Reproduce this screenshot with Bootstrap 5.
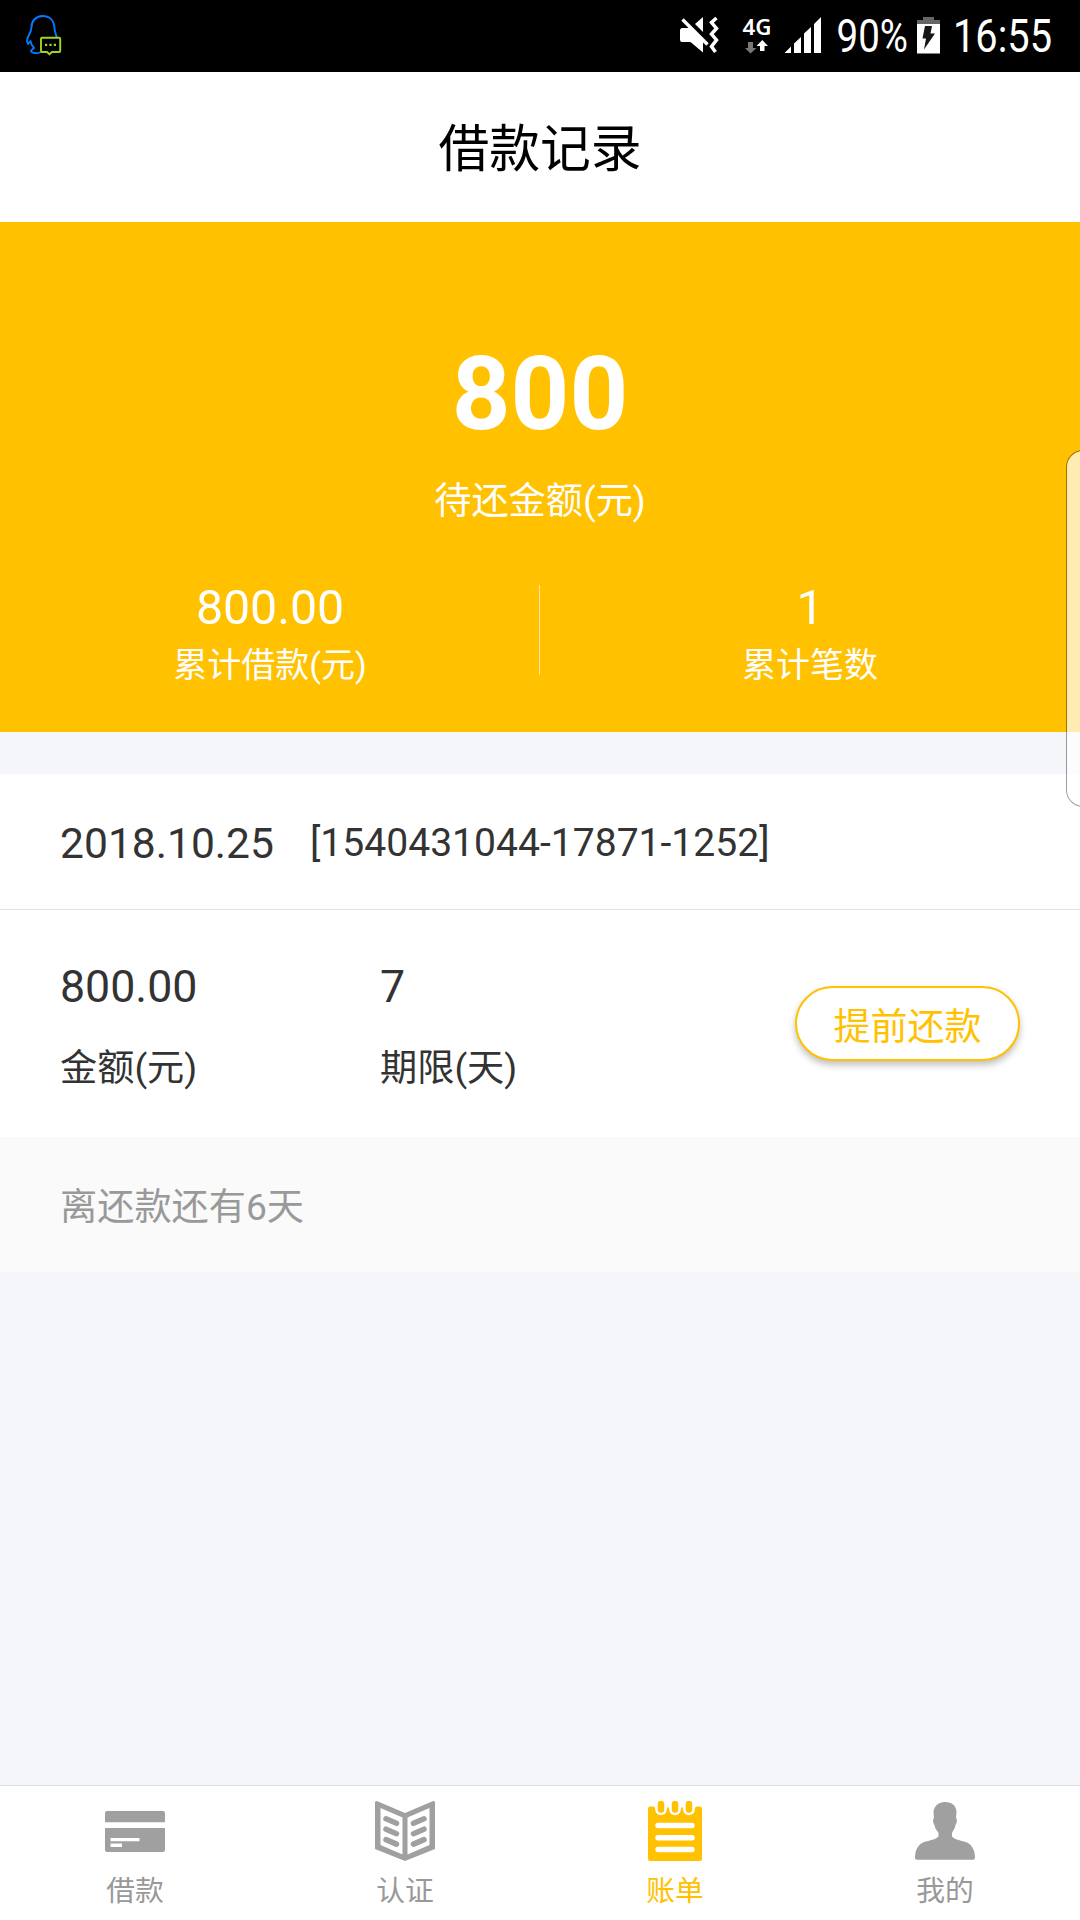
<!DOCTYPE html>
<html lang="zh-CN">
<head>
<meta charset="utf-8">
<meta name="viewport" content="width=device-width, initial-scale=1">
<title>借款记录</title>
<link href="https://cdn.jsdelivr.net/npm/bootstrap@5.3.0/dist/css/bootstrap.min.css" rel="stylesheet">
<style>
body{font-family:Roboto,"Noto Sans CJK SC",sans-serif;background:#f4f6fa;color:#333;line-height:1}
.screen{width:1080px;height:1920px}
.status-bar{height:72px;background:#000}
.title-bar{height:150px;font-size:50.8px;color:#000;padding-top:7px}
.hero{height:510px;background:#ffc100}
.hero-total{font-size:102.5px;line-height:104px;padding-top:120px}
.hero-label{font-size:37.2px;line-height:50px;margin-top:30px}
.hero-stats{margin-top:59px;height:90px}
.stat-sep{width:1px;margin-left:-1px;background:rgba(255,255,255,.6)}
.stat-num{font-size:48.2px;line-height:50px;margin-top:-2px}
.stat-label{font-size:34px;line-height:40px;margin-top:12px}
.record{margin-top:42px}
.record-head{height:136px;border-bottom:1px solid #e0e0e0;padding:3px 60px 0;gap:36px}
.rec-date{font-size:42.6px}
.rec-no{font-size:39.1px;padding-top:2px}
.record-main{height:227px;padding:0 60px}
.rec-cell{width:320px;padding-top:52px}
.rec-val{font-size:44.7px;line-height:50px}
.rec-key{font-size:37.2px;line-height:50px;margin-top:31px}
.btn-repay{width:225px;height:75px;margin-top:-1px;border:2px solid #ffc100;border-radius:38px;color:#ffc100;background:#fff;font-size:37px;line-height:1;padding:8px 0 0;box-shadow:0 4px 7px rgba(0,0,0,.25)}
.record-foot{height:135px;background:#fafafa;color:#999;font-size:37.2px;padding:7px 60px 0}
.tab-bar{height:135px;border-top:1px solid #dcdfe3}
.tab-item{color:#999;font-size:28.8px;padding-top:15px}
.tab-item svg{width:60px;height:60px;fill:#a0a0a0}
.tab-item span{line-height:30px;margin-top:15px}
.tab-item.active{color:#ffc100}
.tab-item.active svg{fill:#ffc100}
.edge-panel{right:-20px;top:450px;width:34px;height:357px;border:1.500px solid rgba(0,0,0,.38);border-radius:20px;background:rgba(255,255,255,.69);background-clip:padding-box}
</style>
</head>
<body>
<div class="screen position-relative overflow-hidden d-flex flex-column">
  <div class="status-bar d-flex flex-shrink-0 justify-content-between">
    <svg width="120" height="72" viewBox="0 0 120 72" fill="none">
      <path d="M57 38C56 34 54.500 32 54.500 28C54 20 49 16 42.500 16C36 16 31.500 21 31.500 27C31.500 33 27.500 35 27 41L28 44L30.500 41C31 45 32 46 34 48C32 50 30 51 31.500 52C34 53.500 38 53.500 41 52" stroke="#007dff" stroke-width="1.900" stroke-linejoin="round"/>
      <path d="M42 37.800H59.200Q60.200 37.800 60.200 38.800V51Q60.200 52 59.200 52H52L49.500 54.300L47 52H42Q41 52 41 51V38.800Q41 37.800 42 37.800Z" stroke="#a6d41c" stroke-width="1.900"/>
      <path d="M45 43.700h2.200v2.200H45zM49.400 43.700h2.200v2.200h-2.200zM53.800 43.700H56v2.200h-2.200z" fill="#a6d41c"/>
    </svg>
    <svg width="420" height="72" viewBox="0 0 420 72" fill="#fff">
      <path d="M30 26.500L28 28H22.500Q20 28 20 30.500V39.500Q20 42 22 42H30.500L43 52.500V40Z"/>
      <path d="M35 24L43 17V32Z"/>
      <path d="M22.500 19.500L47.500 44.500" stroke="#fff" stroke-width="3.300"/>
      <path d="M56.500 18L51.500 22.500L56.500 28.500L51.500 34L56.500 40L51.500 46.500L55.500 52" fill="none" stroke="#fff" stroke-width="3.500"/>
      <text x="82.500" y="34.500" font-family="Noto Sans" font-weight="600" font-size="21.500" textLength="29" lengthAdjust="spacingAndGlyphs">4G</text>
      <path d="M88 42h5v6h3.500L90.500 53.500L85 48h3z" fill="#777"/>
      <path d="M100 51V46h-3.500L102.300 40L108 46h-3.500v5z"/>
      <path d="M124.500 53L131 46.500V53ZM134 53V43.500L141 37V53ZM144 53V33.500L151 27V53ZM154 53V24L161 17V53Z"/>
      <text x="176.500" y="52" font-family="Roboto" font-size="46" textLength="71.500" lengthAdjust="spacingAndGlyphs">90%</text>
      <path d="M263 17h11v3h6v4h-23v-4h6z" fill="#666"/>
      <path d="M257 24h23v29.500h-23z"/>
      <path d="M265 26H272L270.500 33.500H275L264 49.500L266 38.500H262.500Z" fill="#161616"/>
      <text x="293" y="52" font-family="Roboto" font-size="46" textLength="99" lengthAdjust="spacingAndGlyphs">16:55</text>
    </svg>
  </div>
  <header class="title-bar bg-white d-flex flex-shrink-0 align-items-center justify-content-center">借款记录</header>
  <section class="hero text-white text-center flex-shrink-0">
    <div class="hero-total fw-bold">800</div>
    <div class="hero-label">待还金额(元)</div>
    <div class="hero-stats d-flex">
      <div class="flex-fill w-50"><div class="stat-num">800.00</div><div class="stat-label">累计借款(元)</div></div>
      <div class="stat-sep flex-shrink-0"></div>
      <div class="flex-fill w-50"><div class="stat-num">1</div><div class="stat-label">累计笔数</div></div>
    </div>
  </section>
  <section class="record bg-white flex-shrink-0">
    <div class="record-head d-flex align-items-center"><span class="rec-date">2018.10.25</span><span class="rec-no">[1540431044-17871-1252]</span></div>
    <div class="record-main d-flex">
      <div class="rec-cell"><div class="rec-val">800.00</div><div class="rec-key">金额(元)</div></div>
      <div class="rec-cell"><div class="rec-val">7</div><div class="rec-key">期限(天)</div></div>
      <button type="button" class="btn btn-repay ms-auto align-self-center">提前还款</button>
    </div>
    <div class="record-foot d-flex align-items-center">离还款还有6天</div>
  </section>
  <nav class="tab-bar bg-white d-flex mt-auto flex-shrink-0">
    <a class="tab-item col-3 d-flex flex-column align-items-center text-decoration-none" href="#">
      <svg viewBox="0 0 60 60"><path d="M2 10H58Q60 10 60 12V21.300H0V12Q0 10 2 10ZM0 27H60V48.500Q60 51 58 51H2Q0 51 0 48.500Z"/><path fill="#fff" d="M5.500 37H34.500V40.200H5.500ZM5.500 42.500H17V46H5.500Z"/></svg>
      <span>借款</span></a>
    <a class="tab-item col-3 d-flex flex-column align-items-center text-decoration-none" href="#">
      <svg viewBox="0 0 60 60"><path fill-rule="evenodd" d="M0 1Q1-.5 3 .5L30 12L57 .5Q59-.5 60 1V48L30 60L0 48ZM5.500 7V44L27.500 53.500V16.500ZM54.500 7L32.500 16.500V53.500L54.500 44Z"/><path d="M11 17.800L21.500 22.300M11 28.200L21.500 32.700M11 38.600L21.500 43.100M49 17.800L38.500 22.300M49 28.200L38.500 32.700M49 38.600L38.500 43.100" stroke="#a0a0a0" stroke-width="5.500" stroke-linecap="round"/></svg>
      <span>认证</span></a>
    <a class="tab-item active col-3 d-flex flex-column align-items-center text-decoration-none" href="#">
      <svg viewBox="0 0 60 60"><path d="M5 5.500H8.500Q10 5.500 10.200 8.500C10.500 16 21.500 16 21.800 8.500Q22 6 23 6Q24 6 24.200 8.500C24.500 16 35.500 16 35.800 8.500Q36 6 37 6Q38 6 38.200 8.500C38.500 16 49.500 16 49.800 8.500Q50 5.500 51.500 5.500H55Q57 5.500 57 7.500V58Q57 60 55 60H5Q3 60 3 58V7.500Q3 5.500 5 5.500Z"/><path d="M16 3V8.500M30 3V8.500M44 3V8.500" stroke="#ffc100" stroke-width="6.500" stroke-linecap="round"/><path d="M13 24.500H47M13 36.700H47M13 48.500H47" stroke="#fff" stroke-width="5.500" stroke-linecap="round"/></svg>
      <span>账单</span></a>
    <a class="tab-item col-3 d-flex flex-column align-items-center text-decoration-none" href="#">
      <svg viewBox="0 0 60 60"><path d="M30 1C37 1 41.500 5 41.500 11L41 17C42.500 18 42 22 40.500 24C40 28 37.500 30 37 32V35.500C40 39 47 39.500 52 41.500C57 44 60 49 60 57Q60 58.700 58 58.700H2Q0 58.700 0 57C0 49 3 44 8 41.500C13 39.500 20 39 23.500 35.500V32C22.500 30 20 28 19.500 24C18 22 17.500 18 19 17L18.500 11C19 5 23.500 1 30 1Z"/></svg>
      <span>我的</span></a>
  </nav>
  <div class="edge-panel position-absolute"></div>
</div>
<script src="https://cdn.jsdelivr.net/npm/bootstrap@5.3.0/dist/js/bootstrap.bundle.min.js"></script>
</body>
</html>
